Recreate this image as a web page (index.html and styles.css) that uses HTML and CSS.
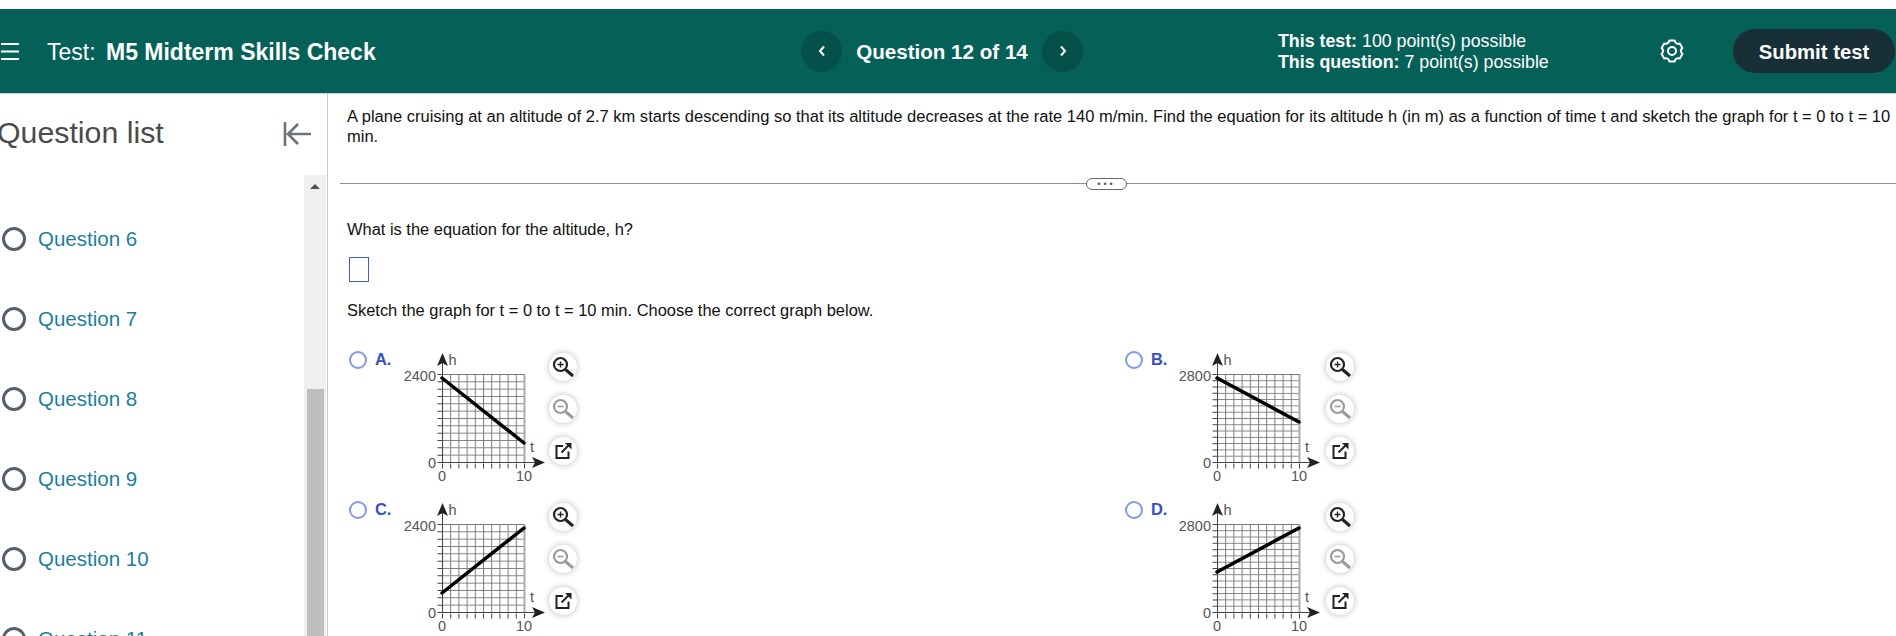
FILE: index.html
```html
<!DOCTYPE html>
<html lang="en">
<head>
  <meta charset="UTF-8">
  <title>Test: M5 Midterm Skills Check</title>
  <link rel="stylesheet" href="styles.css">
</head>
<body>
  <!-- shared graph parts -->
  <svg class="svg-defs" width="0" height="0">
    <defs>
      <pattern id="cells12" patternUnits="userSpaceOnUse" x="42" y="29" width="8.2" height="7.333">
        <path d="M0.5 0V7.333M0 0.5H8.2" fill="none" stroke="#7c7c7c"/>
      </pattern>
      <pattern id="cells14" patternUnits="userSpaceOnUse" x="42" y="29" width="8.2" height="6.286">
        <path d="M0.5 0V6.286M0 0.5H8.2" fill="none" stroke="#7c7c7c"/>
      </pattern>
      <g id="axes">
        <path d="M124.500 29V117" fill="none" stroke="#aaa" stroke-width="2"/>
        <path d="M42 29.500H124" fill="none" stroke="#7c7c7c"/>
        <path d="M42.500 117V15M42 117.500H138" fill="none" stroke="#444"/>
        <path d="M42.500 8L37 21L42.500 18L48 21zM145 117.500L132 112L135 117.500L132 123z" fill="#222"/>
        <path d="M42 121H125" fill="none" stroke="#444" stroke-width="5" stroke-dasharray="1 7.200"/>
      </g>
      <path id="ticks12" d="M40 29V118" fill="none" stroke="#444" stroke-width="5" stroke-dasharray="1 6.333"/>
      <path id="ticks14" d="M40 29V118" fill="none" stroke="#444" stroke-width="5" stroke-dasharray="1 5.286"/>
      <g id="zoom-in-icon" fill="none" stroke="#222" stroke-width="2.200">
        <circle cx="10.500" cy="10.500" r="6.500"/>
        <path d="M15.500 15.500L23 22" stroke-width="3"/>
        <path d="M7.500 10.500H13.500M10.500 7.500V13.500" stroke-width="1.400"/>
      </g>
      <g id="zoom-out-icon" fill="none" stroke="#9a9a9a" stroke-width="2.200">
        <circle cx="10.500" cy="10.500" r="6.500"/>
        <path d="M15.500 15.500L23 22" stroke-width="3"/>
        <path d="M7.500 10.500H13.500" stroke-width="1.600"/>
      </g>
      <g id="popout-icon" fill="none" stroke="#222">
        <path d="M12 7H5.500V19H17.500V12.500" stroke-width="2"/>
        <path d="M10.500 13.500L18 6" stroke-width="2"/>
        <path d="M14 4H20.500V10.500z" fill="#222" stroke="none"/>
      </g>
    </defs>
  </svg>

  <header class="top-bar">
    <div class="title-area">
      <svg class="menu-icon" width="20" height="18" viewBox="0 0 20 18">
        <path d="M1 2H19M1 9.500H19M1 17H19" stroke="#fff" stroke-width="2"/>
      </svg>
      <span class="test-title">Test: <b>M5 Midterm Skills Check</b></span>
    </div>
    <nav class="question-nav">
      <span class="nav-btn">
        <svg width="10" height="12" viewBox="0 0 10 12"><path d="M7 1.500L3 6L7 10.500" fill="none" stroke="#fff" stroke-width="2"/></svg>
      </span>
      <span class="nav-label">Question 12 of 14</span>
      <span class="nav-btn">
        <svg width="10" height="12" viewBox="0 0 10 12"><path d="M3 1.500L7 6L3 10.500" fill="none" stroke="#fff" stroke-width="2"/></svg>
      </span>
    </nav>
    <div class="points">
      <p><b>This test:</b> 100 point(s) possible</p>
      <p><b>This question:</b> 7 point(s) possible</p>
    </div>
    <svg class="gear" width="24" height="24" viewBox="0 0 24 24" fill="none" stroke="#fff" stroke-width="2" stroke-linejoin="round">
      <path d="M9.390 1.520H14.610Q15.700 5.590 19.770 4.500L22.380 9.020Q19.400 12 22.380 14.980L19.770 19.500Q15.700 18.410 14.610 22.480H9.390Q8.300 18.410 4.230 19.500L1.620 14.980Q4.600 12 1.620 9.020L4.230 4.500Q8.300 5.590 9.390 1.520z"/>
      <circle cx="12" cy="12" r="4"/>
    </svg>
    <a class="submit-btn">Submit test</a>
  </header>

  <main class="page">
    <aside class="sidebar">
      <div class="sidebar-head">
        <h2>Question list</h2>
        <svg class="collapse-icon" width="30" height="26" viewBox="0 0 30 26">
          <path d="M2 1V25M28 13H6M15 3L5 13L15 23" fill="none" stroke="#6c7378" stroke-width="2.600"/>
        </svg>
      </div>
      <div class="sidebar-body">
        <ul class="question-list">
          <li><span class="q-radio"></span>Question 6</li>
          <li><span class="q-radio"></span>Question 7</li>
          <li><span class="q-radio"></span>Question 8</li>
          <li><span class="q-radio"></span>Question 9</li>
          <li><span class="q-radio"></span>Question 10</li>
          <li><span class="q-radio"></span>Question 11</li>
        </ul>
        <div class="scrollbar">
          <span class="scroll-arrow"></span>
          <span class="scroll-thumb"></span>
        </div>
      </div>
    </aside>

    <section class="content">
      <p class="prompt">A plane cruising at an altitude of 2.7 km starts descending so that its altitude decreases at the rate 140 m/min. Find the equation for its altitude h (in m) as a function of time t and sketch the graph for t = 0 to t = 10 min.</p>
      <div class="divider"><span class="divider-handle">&bull;&bull;&bull;</span></div>
      <p class="part">What is the equation for the altitude, h?</p>
      <div class="answer-box"></div>
      <p class="part">Sketch the graph for t = 0 to t = 10 min. Choose the correct graph below.</p>

      <div class="options">
        <div class="option">
          <span class="opt-radio"></span>
          <span class="opt-label">A.</span>
          <svg class="graph" width="146" height="140" viewBox="0 0 146 140">
            <rect x="42" y="29" width="82" height="88" fill="url(#cells12)"/>
            <use href="#axes"/><use href="#ticks12"/>
            <path class="plot" d="M42 33L124 98"/>
            <text x="36" y="35.500" text-anchor="end">2400</text>
            <text x="36" y="122.500" text-anchor="end">0</text>
            <text x="42" y="135.500" text-anchor="middle">0</text>
            <text x="124" y="135.500" text-anchor="middle">10</text>
            <text x="48.500" y="20">h</text>
            <text x="130" y="107">t</text>
          </svg>
          <div class="tools">
            <span class="tool"><svg width="26" height="26" viewBox="0 0 26 26"><use href="#zoom-in-icon"/></svg></span>
            <span class="tool"><svg width="26" height="26" viewBox="0 0 26 26"><use href="#zoom-out-icon"/></svg></span>
            <span class="tool"><svg width="24" height="24" viewBox="0 0 24 24"><use href="#popout-icon"/></svg></span>
          </div>
        </div>

        <div class="option option-right">
          <span class="opt-radio"></span>
          <span class="opt-label">B.</span>
          <svg class="graph" width="146" height="140" viewBox="0 0 146 140">
            <rect x="42" y="29" width="82" height="88" fill="url(#cells14)"/>
            <use href="#axes"/><use href="#ticks14"/>
            <path class="plot" d="M42 33L124 77"/>
            <text x="36" y="35.500" text-anchor="end">2800</text>
            <text x="36" y="122.500" text-anchor="end">0</text>
            <text x="42" y="135.500" text-anchor="middle">0</text>
            <text x="124" y="135.500" text-anchor="middle">10</text>
            <text x="48.500" y="20">h</text>
            <text x="130" y="107">t</text>
          </svg>
          <div class="tools">
            <span class="tool"><svg width="26" height="26" viewBox="0 0 26 26"><use href="#zoom-in-icon"/></svg></span>
            <span class="tool"><svg width="26" height="26" viewBox="0 0 26 26"><use href="#zoom-out-icon"/></svg></span>
            <span class="tool"><svg width="24" height="24" viewBox="0 0 24 24"><use href="#popout-icon"/></svg></span>
          </div>
        </div>

        <div class="option">
          <span class="opt-radio"></span>
          <span class="opt-label">C.</span>
          <svg class="graph" width="146" height="140" viewBox="0 0 146 140">
            <rect x="42" y="29" width="82" height="88" fill="url(#cells12)"/>
            <use href="#axes"/><use href="#ticks12"/>
            <path class="plot" d="M42 98L124 33"/>
            <text x="36" y="35.500" text-anchor="end">2400</text>
            <text x="36" y="122.500" text-anchor="end">0</text>
            <text x="42" y="135.500" text-anchor="middle">0</text>
            <text x="124" y="135.500" text-anchor="middle">10</text>
            <text x="48.500" y="20">h</text>
            <text x="130" y="107">t</text>
          </svg>
          <div class="tools">
            <span class="tool"><svg width="26" height="26" viewBox="0 0 26 26"><use href="#zoom-in-icon"/></svg></span>
            <span class="tool"><svg width="26" height="26" viewBox="0 0 26 26"><use href="#zoom-out-icon"/></svg></span>
            <span class="tool"><svg width="24" height="24" viewBox="0 0 24 24"><use href="#popout-icon"/></svg></span>
          </div>
        </div>

        <div class="option option-right">
          <span class="opt-radio"></span>
          <span class="opt-label">D.</span>
          <svg class="graph" width="146" height="140" viewBox="0 0 146 140">
            <rect x="42" y="29" width="82" height="88" fill="url(#cells14)"/>
            <use href="#axes"/><use href="#ticks14"/>
            <path class="plot" d="M42 77L124 33"/>
            <text x="36" y="35.500" text-anchor="end">2800</text>
            <text x="36" y="122.500" text-anchor="end">0</text>
            <text x="42" y="135.500" text-anchor="middle">0</text>
            <text x="124" y="135.500" text-anchor="middle">10</text>
            <text x="48.500" y="20">h</text>
            <text x="130" y="107">t</text>
          </svg>
          <div class="tools">
            <span class="tool"><svg width="26" height="26" viewBox="0 0 26 26"><use href="#zoom-in-icon"/></svg></span>
            <span class="tool"><svg width="26" height="26" viewBox="0 0 26 26"><use href="#zoom-out-icon"/></svg></span>
            <span class="tool"><svg width="24" height="24" viewBox="0 0 24 24"><use href="#popout-icon"/></svg></span>
          </div>
        </div>
      </div>
    </section>
  </main>
</body>
</html>
```

FILE: styles.css
```css
html, body {
  height: 100%;
}

body {
  font-family: "Liberation Sans", Arial, sans-serif;
  background-color: #fff;
  color: #111;
  margin: 0;
  padding-top: 9px;
  box-sizing: border-box;
  overflow: hidden;
  display: flex;
  flex-direction: column;
}

p, ul, h2 {
  margin: 0;
  padding: 0;
}

.svg-defs {
  position: absolute;
}

/* top bar */
.top-bar {
  flex: none;
  height: 84px;
  border-bottom: 1px solid #c3d3de;
  background-color: #056058;
  color: #fff;
  display: flex;
  align-items: center;
}

.title-area {
  width: 801px;
  display: flex;
  align-items: center;
}

.menu-icon {
  margin-right: 27px;
}

.test-title {
  padding-top: 2px;
  font-size: 23px;
}

.test-title b {
  margin-left: 4px;
}

.question-nav {
  width: 477px;
  display: flex;
  align-items: center;
}

.nav-btn {
  width: 41px;
  height: 41px;
  border-radius: 50%;
  background-color: #06504a;
  display: flex;
  align-items: center;
  justify-content: center;
}

.nav-label {
  width: 200px;
  padding-top: 1px;
  text-align: center;
  font-size: 20.6px;
  font-weight: bold;
}

.points {
  width: 382px;
  padding-top: 2px;
  font-size: 17.8px;
  line-height: 21px;
}

.gear {
  flex: none;
}

.submit-btn {
  margin-left: 49px;
  width: 162px;
  height: 42px;
  padding-top: 2px;
  border-radius: 22px;
  background-color: #182f38;
  font-size: 20.3px;
  font-weight: bold;
  display: flex;
  align-items: center;
  justify-content: center;
}

/* main area */
.page {
  flex: 1;
  min-height: 0;
  display: flex;
}

.sidebar {
  flex: none;
  width: 327px;
  border-right: 1px solid #c8ccd4;
  display: flex;
  flex-direction: column;
}

.sidebar-head {
  flex: none;
  height: 81px;
  padding-right: 14px;
  display: flex;
  align-items: flex-start;
  justify-content: space-between;
}

.sidebar-head h2 {
  margin: 22px 0 0 -3px;
  font-size: 30.3px;
  font-weight: normal;
  color: #4a4a4a;
}

.collapse-icon {
  margin-top: 27px;
}

.sidebar-body {
  flex: 1;
  min-height: 0;
  display: flex;
}

.question-list {
  flex: 1;
  list-style: none;
  padding-top: 24px;
  overflow: hidden;
}

.question-list li {
  height: 80px;
  display: flex;
  align-items: center;
  font-size: 20.5px;
  color: #1a7f9e;
}

.q-radio {
  width: 18px;
  height: 18px;
  margin: 0 12px 0 2px;
  border: 3px solid #54606e;
  border-radius: 50%;
}

.scrollbar {
  flex: none;
  width: 22px;
  margin-right: 1px;
  background-color: #f0f0f0;
  display: flex;
  flex-direction: column;
  align-items: center;
}

.scroll-arrow {
  margin-top: 9px;
  border-left: 5px solid transparent;
  border-right: 5px solid transparent;
  border-bottom: 5px solid #505050;
}

.scroll-thumb {
  width: 17px;
  margin-top: 200px;
  flex: 1;
  background-color: #bebebe;
}

/* question */
.content {
  flex: 1;
  min-width: 0;
  padding: 13px 0 0 19px;
  font-size: 16.45px;
  line-height: 20px;
}

.prompt {
  height: 40px;
  font-size: 16.53px;
}

.divider {
  position: relative;
  margin: 36px 0 0 -7px;
  height: 1px;
  background-color: #8a9099;
}

.divider-handle {
  position: absolute;
  left: 746px;
  top: -5px;
  width: 39px;
  height: 10px;
  border: 1px solid #5c6b7a;
  border-radius: 6px;
  background-color: #fff;
  color: #555;
  font-size: 9px;
  line-height: 10px;
  letter-spacing: 3px;
  text-align: center;
}

.part {
  margin-top: 35px;
}

.answer-box {
  width: 18px;
  height: 23px;
  margin: 18px 0 -17px 2px;
  border: 1px solid #3f5fc4;
}

.options {
  margin-top: 25px;
  display: grid;
  grid-template-columns: 776px 1fr;
  grid-auto-rows: 150px;
}

.option {
  display: flex;
  align-items: flex-start;
}

.opt-radio {
  flex: none;
  width: 14px;
  height: 14px;
  margin: 6px 8px 0 2px;
  border: 2px solid #8298ea;
  border-radius: 50%;
}

.opt-label {
  flex: none;
  width: 25px;
  margin-top: 4px;
  font-size: 16.4px;
  font-weight: bold;
  color: #3350c8;
}

.graph {
  flex: none;
}

.graph text {
  font-size: 14.5px;
  fill: #555;
}

.plot {
  fill: none;
  stroke: #000;
  stroke-width: 3.5;
  stroke-linecap: round;
}

.tools {
  margin: 8px 0 0 3px;
  display: flex;
  flex-direction: column;
  gap: 14px;
}

.tool {
  width: 28px;
  height: 28px;
  border-radius: 50%;
  background-color: #fff;
  box-shadow: 0 0 6px rgba(0, 0, 0, 0.28);
  display: flex;
  align-items: center;
  justify-content: center;
}

.option-right .opt-label {
  width: 24px;
}

.option-right .tools {
  margin-left: 5px;
}
```
